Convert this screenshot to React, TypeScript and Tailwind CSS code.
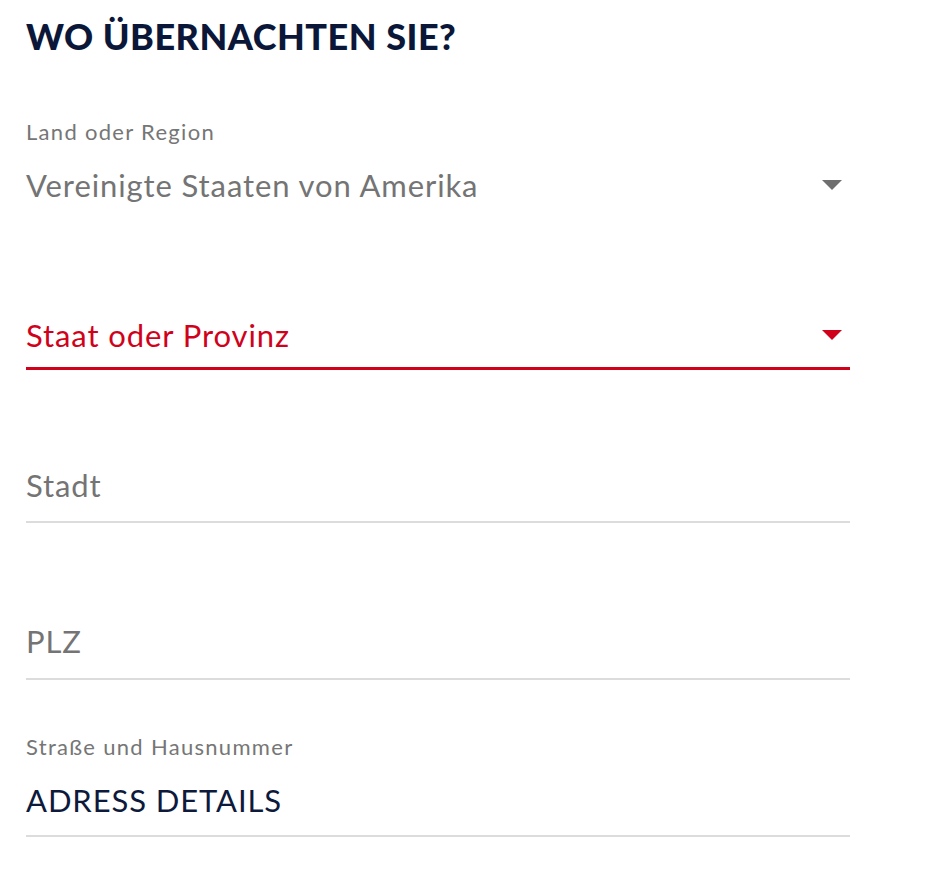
import React from "react";

function Caret({ color }: { color: string }) {
  return (
    <svg width="20" height="10" viewBox="0 0 20 10" className={color}>
      <path d="M0 0 H20 L10 10 Z" fill="currentColor" />
    </svg>
  );
}

interface FieldProps {
  label?: string;
  value: string;
  tone: "muted" | "error" | "filled";
  select?: boolean;
  line?: boolean;
  className?: string;
}

function Field({ label, value, tone, select, line = true, className = "" }: FieldProps) {
  const textColor =
    tone === "error" ? "text-[#d0021b]" : tone === "filled" ? "text-[#0e1a3c]" : "text-[#747474]";
  const border = !line
    ? ""
    : tone === "error"
      ? "border-b-[3px] border-[#d0021b]"
      : "border-b-2 border-[#dcdcdc]";
  return (
    <div className={`flex flex-col ${border} ${className}`}>
      {label && (
        <span className="text-[22px] leading-[24px] tracking-[1.3px] text-[#767676] mb-[23px]">
          {label}
        </span>
      )}
      <div className="flex items-center justify-between">
        <span className={`text-[31px] leading-[36px] tracking-[0.9px] ${textColor}`}>{value}</span>
        {select && (
          <span className="mr-[8px] flex">
            <Caret color={tone === "error" ? "text-[#d0021b]" : "text-[#6f6f6f]"} />
          </span>
        )}
      </div>
    </div>
  );
}

export default function App() {
  return (
    <div className="min-h-[894px] w-[940px] bg-white px-[26px] font-['Lato','Liberation_Sans',sans-serif]">
      <h1 className="pt-[18px] text-[36px] leading-[36px] font-black tracking-[0.5px] text-[#0b1738]">
        WO ÜBERNACHTEN SIE?
      </h1>
      <div className="w-[824px] flex flex-col">
        <Field
          className="mt-[66px]"
          label="Land oder Region"
          value="Vereinigte Staaten von Amerika"
          tone="muted"
          select
          line={false}
        />
        <Field className="mt-[114px] pb-[14px]" value="Staat oder Provinz" tone="error" select />
        <Field className="mt-[97px] pb-[18px]" value="Stadt" tone="muted" />
        <Field className="mt-[100px] pb-[19px]" value="PLZ" tone="muted" />
        <Field
          className="mt-[55px] pb-[17px]"
          label="Straße und Hausnummer"
          value="ADRESS DETAILS"
          tone="filled"
        />
      </div>
    </div>
  );
}
